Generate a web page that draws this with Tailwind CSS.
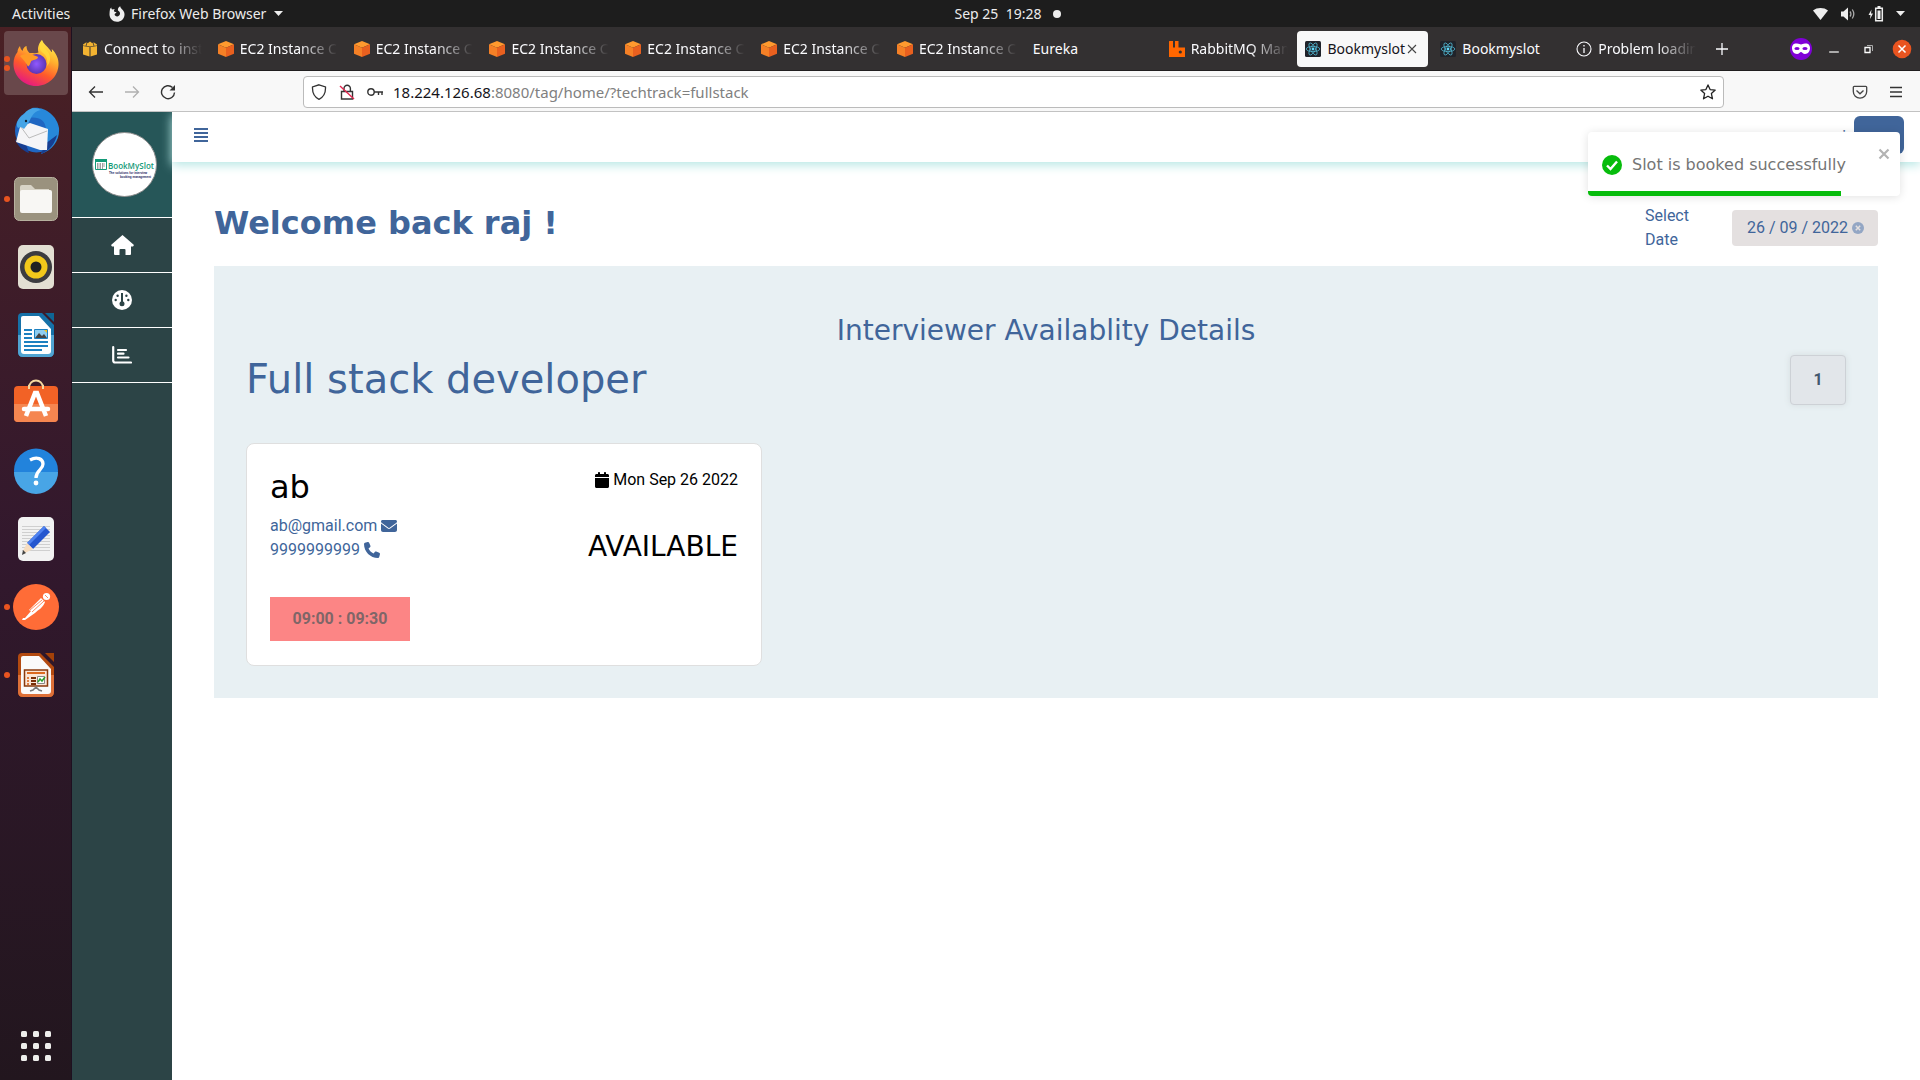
<!DOCTYPE html>
<html lang="en">
<head>
<meta charset="utf-8">
<title>Bookmyslot</title>
<script src="https://cdn.jsdelivr.net/npm/@tailwindcss/browser@4"></script>
</head>
<body class="flex h-screen flex-col overflow-hidden bg-white font-['Noto_Sans',sans-serif] text-[#40659a]">

<svg class="hidden" aria-hidden="true">
  <symbol id="cube" viewBox="0 0 16 16"><path fill="#ff9a2e" d="M8 0l8 3.3L8 6.8 0 3.3z"/><path fill="#f58026" d="M0 3.3l8 3.5V16l-8-3.2z"/><path fill="#e9601f" d="M16 3.3L8 6.8V16l8-3.2z"/></symbol>
  <symbol id="react" viewBox="0 0 16 16"><rect width="16" height="16" rx="1.5" fill="#20232a"/><g fill="none" stroke="#4fb3cc" stroke-width=".8"><ellipse cx="8" cy="8" rx="6.8" ry="2.6"/><ellipse cx="8" cy="8" rx="6.8" ry="2.6" transform="rotate(60 8 8)"/><ellipse cx="8" cy="8" rx="6.8" ry="2.6" transform="rotate(120 8 8)"/></g><circle cx="8" cy="8" r="1.4" fill="#61dafb"/></symbol>
</svg>

<!-- System bar -->
<header class="relative flex h-[27px] shrink-0 items-center justify-between bg-[#1d1d1d] px-3 text-sm text-[#ececec]">
  <div class="flex items-center">
    <span class="w-[97px]">Activities</span>
    <svg class="mr-1.5 size-4" viewBox="0 0 16 16"><path fill="#eee" d="M1 3.2C1.300 2.500 1.700 2 2.300 1.600c0 .9.300 1.500.8 2C3.900 3.200 5 3.100 5.800 3.300 5 4.200 4.700 5 5.200 5.600c.6.600 1.800.3 2.300.7-.3 1-1.700 1-1.900 2C5.700 9.700 7 10.500 8.400 10.400c1.700-.2 2.800-1.600 2.600-3.300-.2-1.300-1.200-2-2-2.600C8.500 2.700 9.600.9 11.200.2c0 1.600 1.300 2.200 2.300 3.500C15 5.500 15.700 7 15.500 9c-.4 4-3.600 6.800-7.500 6.800-4.200 0-7.500-3.300-7.500-7.500C.5 6.400.7 4.700 1 3.200z"/></svg>
    <span>Firefox Web Browser</span>
    <svg class="ml-2 h-[5px] w-[9px]" viewBox="0 0 9 5"><path fill="#eee" d="M0 0h9L4.500 5z"/></svg>
  </div>
  <div class="absolute inset-x-0 flex items-center justify-center gap-3 whitespace-pre pl-24"><span>Sep 25  19:28</span><span class="size-2 rounded-full bg-[#eee]"></span></div>
  <div class="flex items-center gap-3 pr-[3px]">
    <svg class="h-3 w-[15px]" viewBox="0 0 15 12"><path fill="#eee" d="M0 2.500C4-.8 11-.8 15 2.500L7.500 12z"/></svg>
    <svg class="h-[14px] w-4" viewBox="0 0 16 14"><path fill="#eee" d="M1 4.500h2.500L8 .5v13L3.500 9.500H1z"/><path fill="none" stroke="#aaa" stroke-width="1.300" d="M10 4.500q1.800 2.500 0 5M12.300 2.500q3 4.500 0 9"/></svg>
    <svg class="h-4 w-4" viewBox="0 0 16 16"><path fill="#eee" d="M3.500 3.500L.5 9h2l-.5 4 3-5.500H3z"/><path fill="none" stroke="#eee" stroke-width="1.500" d="M7.700 2.300h6.600v12.500H7.700z"/><path fill="#eee" d="M9.500 4.500h3v8.500h-3zM9.500 0h3v2h-3z"/></svg>
    <svg class="h-[5px] w-[9px]" viewBox="0 0 9 5"><path fill="#eee" d="M0 0h9L4.500 5z"/></svg>
  </div>
</header>

<div class="flex min-h-0 flex-1">

  <!-- Dock -->
  <aside class="flex w-18 shrink-0 flex-col justify-between border-r border-[#1e1020] bg-linear-to-b from-[#4a2024] via-[#32182d] to-[#22161e] pt-1 pb-[19px]" aria-label="Dock">
    <div class="flex flex-col gap-1">
      <div class="relative mx-auto flex size-16 items-center justify-center rounded-[4px] bg-[#69484b]">
        <span class="absolute left-0 top-[25px] size-[6px] rounded-full bg-[#e95420]"></span><span class="absolute left-0 top-[34px] size-[6px] rounded-full bg-[#e95420]"></span>
        <svg class="size-12" viewBox="0 0 48 48"><defs><linearGradient id="ff" x1=".8" y1="0" x2=".3" y2="1"><stop offset="0" stop-color="#fff44f"/><stop offset=".35" stop-color="#ffb02e"/><stop offset=".65" stop-color="#ff5a2a"/><stop offset="1" stop-color="#e31587"/></linearGradient><radialGradient id="fp"><stop offset="0" stop-color="#9059ff"/><stop offset="1" stop-color="#5b35b5"/></radialGradient></defs><path fill="url(#ff)" d="M30 1c1.500 4 5 6 8 10 1 1 1 2 2 2 0-1 0-2-.3-3C44 14 47 20 46.500 26 46 38 36 47 24 47S1.500 37 1.500 25c0-5 1.500-9 4-12 0-2 .8-4 2.500-6 .3 2 1 3.500 2.500 5C11 9 13 7.500 14.500 7c0 3 1 5 3 7 4 0 7 .5 9-.5C25 9 27 4 30 1z"/><circle cx="24.500" cy="25" r="10" fill="url(#fp)"/><path fill="#ff9a26" d="M8 17c5-3 10-2 13-1 2 1 4 1 5 2 0 3-6 2.500-7 4.500-1 2-1 4-3 5-2-4-5-7-8-10.500z"/><path fill="#ffdc3e" opacity=".75" d="M30 1c-4 5-3 10 1 13 4 3 5 8 4 13 4-4 4-10 1-14-3-4-6-6-6-12z"/></svg>
      </div>
      <div class="relative mx-auto flex size-16 items-center justify-center">
        <svg class="size-12" viewBox="0 0 48 48"><circle cx="24.500" cy="24" r="21.500" fill="#1f66c2"/><path fill="#2788da" d="M20 1c12-2 25 7 27 20 1 12-6 22-18 26 5-8 6-17 5-25C33 12 26 9 15 11z"/><path fill="#173e92" d="M45 28c-2 9-8 16-16 19l4-10zM3 33c4 7 8 11 14 13L14 37z"/><path fill="#f5f5f7" d="M8 20l10-4 18 6-1 21-7 0-24-8z"/><path fill="none" stroke="#bbb" d="M9 20l8 11 18-7"/><path fill="#45a4e6" d="M12 7c4-6 11-7 17-4-6 1-9 5-11 10-2 4-4 6-6 9-2-2-4-2-6-1C3 17 6 11 12 7z"/><circle cx="14" cy="14" r="1.200" fill="#123"/></svg>
      </div>
      <div class="relative mx-auto flex size-16 items-center justify-center">
        <span class="absolute left-0 top-[29px] size-[6px] rounded-full bg-[#e95420]"></span>
        <svg class="size-12" viewBox="0 0 48 48"><rect x="2.500" y="2.500" width="43" height="43" rx="5" fill="#9a927e" stroke="#b7b19f"/><path fill="#d8d4c7" d="M8 12q0-2 2-2h9l4 4h14v5H8z"/><rect x="8" y="15" width="32" height="23" rx="2" fill="#f8f7f4"/></svg>
      </div>
      <div class="relative mx-auto flex size-16 items-center justify-center">
        <svg class="size-12" viewBox="0 0 48 48"><rect x="6" y="2" width="36" height="44" rx="5" fill="#e3dfd3"/><circle cx="24" cy="24" r="16" fill="#3c3c40"/><circle cx="24" cy="24" r="11.500" fill="#f2c81b"/><circle cx="24" cy="24" r="5.500" fill="#222"/></svg>
      </div>
      <div class="relative mx-auto flex size-16 items-center justify-center">
        <svg class="size-12" viewBox="0 0 48 48"><path fill="#1671a8" d="M10 2h20l12 12v27q0 5-5 5H11q-5 0-5-5V6q0-4 4-4z"/><path fill="#50a4d2" d="M6 24h36v17q0 5-5 5H11q-5 0-5-5z"/><path fill="#0e6595" d="M33 2h9v9z"/><path fill="#fff" d="M11 5h16l12 13v22q0 3-3 3H12q-3 0-3-3V7q0-2 2-2z"/><path stroke="#1c80c0" stroke-width="2" d="M12 19h8M12 23h8M12 27h8M12 31h24M12 35h24M12 39h18"/><path fill="#8ecdf0" stroke="#1c80c0" d="M22.500 18.500h13v9h-13z"/><path fill="#444" d="M23 27l4-5 3 3 2-2 3 4z"/><path fill="#f0c020" d="M32 19h3v3z"/></svg>
      </div>
      <div class="relative mx-auto flex size-16 items-center justify-center">
        <svg class="size-12" viewBox="0 0 48 48"><path fill="none" stroke="#f5d9a0" stroke-width="2" d="M17 9C17-1 31-1 31 9"/><rect x="2" y="7" width="44" height="36" rx="4" fill="#f26226"/><path fill="#f58650" d="M2 25h44v14q0 4-4 4H6q-4 0-4-4z"/><path fill="none" stroke="#f5d9a0" stroke-width="2" d="M17 6v4M31 6v4"/><path fill="none" stroke="#fff" stroke-width="4.500" d="M14 37l9-23h2l9 23"/><path stroke="#fff" stroke-width="4.500" stroke-linecap="round" d="M12 30h24"/></svg>
      </div>
      <div class="relative mx-auto flex size-16 items-center justify-center">
        <svg class="size-12" viewBox="0 0 48 48"><circle cx="24" cy="23.500" r="22" fill="#2283dc"/><path fill="#48a5e6" d="M2 25h44a22 22 0 0 1-44 0z"/><path fill="none" stroke="#fff" stroke-width="3.300" d="M18 13c7-4 13-1 13 4 0 6-7 6-7 14"/><circle cx="24" cy="36" r="2.400" fill="#fff"/></svg>
      </div>
      <div class="relative mx-auto flex size-16 items-center justify-center">
        <svg class="size-12" viewBox="0 0 48 48"><rect x="6" y="2" width="36" height="44" rx="5" fill="#f2f2f2"/><path stroke="#cfcfcf" d="M10 11.500h28M10 14.500h28M10 17.500h28M10 20.500h28M10 23.500h28M10 26.500h28M10 29.500h28M10 32.500h28M10 35.500h28"/><path fill="#2456cf" d="M32 11l6 6-17 17-6-6z"/><path fill="#4f82f0" d="M32 11l2 2-17 17-2-2z"/><path fill="#f7ddc0" d="M15 28l6 6-8 4-2-2z"/><path fill="#444" d="M11 35l3 3-4 2z"/></svg>
      </div>
      <div class="relative mx-auto flex size-16 items-center justify-center">
        <span class="absolute left-0 top-[29px] size-[6px] rounded-full bg-[#e95420]"></span>
        <svg class="size-12" viewBox="0 0 48 48"><circle cx="24" cy="24" r="23" fill="#ff6c37"/><circle cx="34.500" cy="13.500" r="3.600" fill="#fff"/><path fill="#fff" d="M29 15l4 4c-2 6-7 8-10 11l-10 7-3 0 1-2 2 0 6-7-2-1 5-5z"/><path stroke="#ff6c37" stroke-width=".8" d="M32 18L20 29M30 17L18 27M33 12l3 3"/></svg>
      </div>
      <div class="relative mx-auto flex size-16 items-center justify-center">
        <span class="absolute left-0 top-[29px] size-[6px] rounded-full bg-[#e95420]"></span>
        <svg class="size-12" viewBox="0 0 48 48"><path fill="#b34a10" d="M10 2h18l14 14v25q0 5-5 5H11q-5 0-5-5V6q0-4 4-4z"/><path fill="#dd7038" d="M6 24h36v17q0 5-5 5H11q-5 0-5-5z"/><path fill="#a34108" d="M33 2h9v9z"/><path fill="#fafafa" d="M11 5h16l12 13v22q0 3-3 3H12q-3 0-3-3V7q0-2 2-2z"/><path fill="#fbe6d8" stroke="#8a3a0c" stroke-width="1.500" d="M12.500 19h23v16h-23z"/><path stroke="#dd6a20" stroke-width="2" d="M15 22h18"/><path stroke="#e08040" stroke-width="2" d="M15 27h2M15 30h2M15 33h2"/><path stroke="#7a2f08" stroke-width="2" d="M19 27h5M19 30h5M19 33h5"/><path fill="#fff" stroke="#888" d="M25.500 25.500h7v7h-7z"/><path fill="none" stroke="#2ba02b" stroke-width="1.500" d="M26 31l2-3 2 2 3-4"/><path fill="none" stroke="#777" stroke-width="1.500" d="M18 40l3-1 3-3 3 3 3 1"/></svg>
      </div>
    </div>
    <svg class="mx-auto size-[30px]" viewBox="0 0 30 30" fill="#eeeeec"><rect width="6" height="6" rx="1.500"/><rect x="12" width="6" height="6" rx="1.500"/><rect x="24" width="6" height="6" rx="1.500"/><rect y="12" width="6" height="6" rx="1.500"/><rect x="12" y="12" width="6" height="6" rx="1.500"/><rect x="24" y="12" width="6" height="6" rx="1.500"/><rect y="24" width="6" height="6" rx="1.500"/><rect x="12" y="24" width="6" height="6" rx="1.500"/><rect x="24" y="24" width="6" height="6" rx="1.500"/></svg>
  </aside>

  <div class="flex min-w-0 flex-1 flex-col">

    <!-- Tab strip -->
    <div class="flex h-11 shrink-0 items-center border-b border-[#201e1f] bg-[#333031] pl-0.5 pt-px text-sm text-[#fbfbfe]">
      <div class="grid min-w-0 flex-1 grid-cols-12 items-center whitespace-nowrap">
        <div class="flex items-center gap-1.5 px-2"><svg class="size-4 shrink-0" viewBox="0 0 16 16"><path fill="#f3b331" d="M1 5l6.500 1v9.500L1 13.500zM15 5L8.500 6v9.500L15 13.500z"/><path fill="#f3b331" d="M1 3.500L4 1.500l2 .5 2-1.500 2 1.500 2-.5 3 2v1L8 5.500 1 4.500z"/><path stroke="#333031" stroke-width=".8" d="M5 1.500L4 5M11 1.500L12 5"/></svg><span class="flex-1 overflow-hidden mask-r-from-60%">Connect to instance</span></div>
        <div class="flex items-center gap-1.5 px-2"><svg class="size-4 shrink-0"><use href="#cube"/></svg><span class="flex-1 overflow-hidden mask-r-from-60%">EC2 Instance Connect</span></div>
        <div class="flex items-center gap-1.5 px-2"><svg class="size-4 shrink-0"><use href="#cube"/></svg><span class="flex-1 overflow-hidden mask-r-from-60%">EC2 Instance Connect</span></div>
        <div class="flex items-center gap-1.5 px-2"><svg class="size-4 shrink-0"><use href="#cube"/></svg><span class="flex-1 overflow-hidden mask-r-from-60%">EC2 Instance Connect</span></div>
        <div class="flex items-center gap-1.5 px-2"><svg class="size-4 shrink-0"><use href="#cube"/></svg><span class="flex-1 overflow-hidden mask-r-from-60%">EC2 Instance Connect</span></div>
        <div class="flex items-center gap-1.5 px-2"><svg class="size-4 shrink-0"><use href="#cube"/></svg><span class="flex-1 overflow-hidden mask-r-from-60%">EC2 Instance Connect</span></div>
        <div class="flex items-center gap-1.5 px-2"><svg class="size-4 shrink-0"><use href="#cube"/></svg><span class="flex-1 overflow-hidden mask-r-from-60%">EC2 Instance Connect</span></div>
        <div class="px-2">Eureka</div>
        <div class="flex items-center gap-1.5 px-2"><svg class="size-4 shrink-0" viewBox="0 0 16 16"><path fill="#f60" d="M0 .5Q0 0 .5 0h3.500v6.500h2V0H9.500v6.500H16V16H0z"/><circle cx="11.300" cy="11" r="1.600" fill="#333031"/></svg><span class="flex-1 overflow-hidden mask-r-from-60%">RabbitMQ Management</span></div>
        <div class="pl-px pr-1"><div class="flex h-9 items-center rounded-[4px] bg-[#f8f8f8] pl-2 text-[#15141a]"><svg class="mr-1.5 size-4 shrink-0"><use href="#react"/></svg><span>Bookmyslot</span><button class="ml-px shrink-0" aria-label="Close tab"><svg class="size-3" viewBox="0 0 12 12"><path stroke="#444" stroke-width="1.100" d="M2 2l8 8M10 2l-8 8"/></svg></button></div></div>
        <div class="flex items-center gap-1.5 px-2"><svg class="size-4 shrink-0"><use href="#react"/></svg><span>Bookmyslot</span></div>
        <div class="flex items-center gap-1.5 px-2"><svg class="size-4 shrink-0" viewBox="0 0 16 16"><circle cx="8" cy="8" r="7" fill="none" stroke="#fbfbfe" stroke-width="1.100"/><path stroke="#fbfbfe" stroke-width="1.300" d="M8 7v5M8 4v1.600"/></svg><span class="flex-1 overflow-hidden mask-r-from-60%">Problem loading page</span></div>
      </div>
      <button class="ml-2.5 mr-[60px]" aria-label="New tab"><svg class="size-4" viewBox="0 0 16 16"><path stroke="#fbfbfe" stroke-width="1.300" d="M8 2v12M2 8h12"/></svg></button>
      <div class="flex items-center pr-2">
        <svg class="size-[22px]" viewBox="0 0 22 22"><circle cx="11" cy="11" r="11" fill="#8000d7"/><path fill="#fff" d="M2 10c0-4 3-5 5-4.500 2 .4 3 .9 4 .9s2-.5 4-.9c2-.5 5 .5 5 4.500 0 3-2 6-5 6-2 0-3-2-4-2s-2 2-4 2c-3 0-5-3-5-6z"/><ellipse cx="7" cy="10.500" rx="2.600" ry="1.600" fill="#8000d7"/><ellipse cx="15" cy="10.500" rx="2.600" ry="1.600" fill="#8000d7"/></svg>
        <button class="ml-4" aria-label="Minimize"><svg class="size-3" viewBox="0 0 10 10"><path stroke="#fff" d="M1 7.500h8"/></svg></button>
        <button class="ml-[22px]" aria-label="Restore"><svg class="size-3" viewBox="0 0 12 12"><path fill="none" stroke="#aaa" d="M5 2.500h5.500V8"/><path fill="none" stroke="#fff" stroke-width="1.300" d="M3 4.500h5v5H3z"/></svg></button>
        <button class="ml-[18px]" aria-label="Close window"><svg class="size-[20px]" viewBox="0 0 20 20"><circle cx="10" cy="10" r="9.300" fill="#e95420"/><path stroke="#fff" stroke-width="1.500" d="M6.500 6.500l7 7M13.500 6.500l-7 7"/></svg></button>
      </div>
    </div>

    <!-- Navigation toolbar -->
    <div class="flex h-[41px] shrink-0 items-center border-b border-[#c2c2c2] bg-[#f8f8f8] px-4 pt-px">
      <button aria-label="Back"><svg class="size-4" viewBox="0 0 16 16" fill="none" stroke="#333" stroke-width="1.300"><path d="M15 8H1.500M7 2.500L1.500 8 7 13.500"/></svg></button>
      <button class="ml-5" aria-label="Forward"><svg class="size-4" viewBox="0 0 16 16" fill="none" stroke="#b0b0b0" stroke-width="1.300"><path d="M1 8h13.500M9 2.500L14.500 8 9 13.500"/></svg></button>
      <button class="ml-5" aria-label="Reload"><svg class="size-4" viewBox="0 0 16 16" fill="none" stroke="#333" stroke-width="1.400"><path d="M14.500 8.500A6.500 6.500 0 1 1 12.500 3.500"/><path fill="#333" stroke="none" d="M15 1v5.500H9.500z"/></svg></button>
      <div class="ml-[127px] mr-32 flex h-8 flex-1 items-center rounded-[4px] border border-[#bbb] bg-white px-[7px]">
        <svg class="size-4" viewBox="0 0 16 16" fill="none" stroke="#333" stroke-width="1.300"><path d="M8 .8L14.500 3c.3 6-1.500 10-6.500 12.300C3 13 1.200 9 1.500 3z"/></svg>
        <svg class="ml-3 size-4" viewBox="0 0 16 16" fill="none" stroke="#333" stroke-width="1.400"><path d="M2.500 7.500h11V15h-11zM5 7V4.500a3.200 3.200 0 0 1 6.400 0V7"/><path stroke="#e22850" d="M1 2l14 13"/></svg>
        <svg class="ml-3 size-4" viewBox="0 0 16 16" fill="none" stroke="#333" stroke-width="1.400"><circle cx="4" cy="8" r="3.200"/><path d="M7 8h9M11.500 8v3M15 8v3"/></svg>
        <a href="#" class="ml-2.5 flex-1 text-[15px] leading-5 text-[#808080]"><span class="text-[#15141a]">18.224.126.68</span>:8080/tag/home/?techtrack=fullstack</a>
        <button aria-label="Bookmark this page"><svg class="size-4" viewBox="0 0 16 16" fill="none" stroke="#222" stroke-width="1.300" stroke-linejoin="round"><path d="M8 .9l2.100 4.700 5.100.5-3.800 3.500 1.100 5.200L8 12.200l-4.500 2.600 1.100-5.200L.8 6.100l5.100-.5z"/></svg></button>
      </div>
      <button class="mr-5" aria-label="Save to Pocket"><svg class="size-4" viewBox="0 0 16 16" fill="none" stroke="#444" stroke-width="1.300"><path d="M2.300 2.300h11.400q1 0 1 1V7.500a6.700 6.700 0 0 1-13.400 0V3.300q0-1 1-1z"/><path d="M4.500 6.500L8 9.800l3.500-3.300"/></svg></button>
      <button aria-label="Menu"><svg class="size-4" viewBox="0 0 16 16"><path stroke="#333" stroke-width="1.300" d="M2 3.500h12M2 8h12M2 12.500h12"/></svg></button>
    </div>

    <!-- Page -->
    <div class="relative flex min-h-0 flex-1 overflow-hidden font-['Roboto',sans-serif] text-base leading-6">
      <nav class="flex w-25 shrink-0 flex-col bg-[#2c4446]">
        <a href="#" aria-label="BookMySlot" class="flex h-[106px] items-center justify-center border-b border-white bg-[#265658] pl-1">
          <svg class="size-[65px]" viewBox="0 0 65 65"><circle cx="32.500" cy="32.500" r="32" fill="#fff" stroke="#8c8c8c"/><path fill="#fff" stroke="#149a78" d="M3.500 27.500h11v10h-11z"/><path fill="#149a78" d="M3 27h12v3H3z"/><path stroke="#444" stroke-width="1.200" stroke-dasharray="1.500 1" d="M5 32h8M5 34h8M5 36h6"/><text x="16" y="37" font-family="Open Sans, sans-serif" font-size="8" font-weight="600" fill="#149a78">BookMySlot</text><text x="17" y="42" font-family="Liberation Sans, sans-serif" font-size="3" font-weight="700" fill="#1b1b60">The solutions for interview</text><text x="28" y="46" font-family="Liberation Sans, sans-serif" font-size="3" font-weight="700" fill="#1b1b60">booking management</text></svg>
        </a>
        <a href="#" aria-label="Home" class="flex h-[55px] items-center justify-center border-b border-white"><svg class="h-5 w-[23px]" viewBox="0 0 23 20"><path fill="#fff" d="M11.500 0L23 10l-1 1.500h-2V19q0 1-1 1h-4.500v-5q0-1-1-1h-4q-1 0-1 1v5H4q-1 0-1-1v-7.500H1L0 10z"/></svg></a>
        <a href="#" aria-label="Dashboard" class="flex h-[55px] items-center justify-center border-b border-white"><svg class="size-5" viewBox="0 0 20 20"><circle cx="10" cy="10" r="10" fill="#fff"/><g fill="#2c4446"><circle cx="10" cy="13.800" r="2.500"/><path d="M9 3h2v10H9z"/><circle cx="5.600" cy="5.800" r="1.200"/><circle cx="14.400" cy="5.800" r="1.200"/><circle cx="3.700" cy="10" r="1.200"/><circle cx="16.300" cy="10" r="1.200"/></g></svg></a>
        <a href="#" aria-label="Reports" class="flex h-[55px] items-center justify-center border-b border-white"><svg class="size-5" viewBox="0 0 20 20" fill="none" stroke="#fff" stroke-width="2.200" stroke-linecap="round"><path d="M1.200 2v13.500q0 2 2 2H19M6 5h8M6 8.700h5.500M6 12.500h10.500"/></svg></a>
      </nav>

      <main class="flex min-w-0 flex-1 flex-col">
        <div class="flex h-[50px] shrink-0 items-center bg-white pb-1 pl-[22px] pr-4 shadow-[0_3px_10px_#b5e6e4]">
          <button aria-label="Toggle menu"><svg class="block size-3.5" viewBox="0 0 14 14"><path fill="#40659a" d="M0 0h14v2H0zM0 4h14v2H0zM0 8h14v2H0zM0 12h14v2H0z"/></svg></button>
          <span class="ml-auto mr-2 pt-1">raj</span>
          <button class="h-[38px] w-[50px] rounded-md bg-[#40659a]" aria-label="Log out"></button>
        </div>

        <div class="px-[42px] pt-[42px]">
          <div class="flex items-start justify-between">
            <h1 class="font-['DejaVu_Sans',sans-serif] text-[32px] leading-[38px] font-bold">Welcome back raj !</h1>
            <div class="flex items-center">
              <label for="date" class="w-[87px]"><span class="block w-12">Select Date</span></label>
              <div class="flex h-9 items-center rounded-[4px] bg-[#e4e0e0] pl-[15px] pr-[14px]">
                <input id="date" type="text" value="26 / 09 / 2022" class="w-[105px] bg-transparent outline-none">
                <button aria-label="Clear date"><svg class="block size-3" viewBox="0 0 12 12"><circle cx="6" cy="6" r="6" fill="#93a6c4"/><path stroke="#e4e0e0" stroke-width="1.500" d="M3.800 3.800l4.400 4.400M8.200 3.800l-4.400 4.400"/></svg></button>
              </div>
            </div>
          </div>

          <section class="mt-[14px] bg-[#e8f0f3] px-8 pt-12 pb-8">
            <h2 class="text-center font-['DejaVu_Sans',sans-serif] text-[28px] leading-[34px]">Interviewer Availablity Details</h2>
            <div class="mt-[7px] flex items-start justify-between">
              <h3 class="font-['DejaVu_Sans',sans-serif] text-[40px] leading-12">Full stack developer</h3>
              <button class="h-[50px] w-14 rounded-[4px] border border-[#cdd1d6] bg-[#e2e6ea] font-bold text-[#43586e] shadow-[0_0_6px_#d5dcdf]">1</button>
            </div>

            <article class="mt-[38px] w-full max-w-[516px] rounded-lg border border-[#dfdfdf] bg-white px-[23px] py-6">
              <div class="flex justify-between text-black">
                <div>
                  <h4 class="font-['DejaVu_Sans',sans-serif] text-[32px] leading-[38px]">ab</h4>
                  <p class="mt-2 text-[#40659a]">
                    <a href="#" class="flex items-center gap-1">ab@gmail.com <svg class="size-4" viewBox="0 0 512 512"><path fill="#40659a" d="M48 64C21.500 64 0 85.500 0 112c0 15.100 7.100 29.300 19.200 38.400L236.800 313.600c11.400 8.500 27 8.500 38.400 0L492.800 150.400c12.100-9.100 19.200-23.300 19.200-38.400c0-26.500-21.500-48-48-48H48zM0 176V384c0 35.300 28.700 64 64 64H448c35.300 0 64-28.700 64-64V176L294.400 339.200c-22.800 17.100-54 17.100-76.800 0L0 176z"/></svg></a>
                    <a href="#" class="flex items-center gap-1">9999999999 <svg class="size-4" viewBox="0 0 512 512"><path fill="#40659a" d="M164.900 24.600c-7.700-18.600-28-28.500-47.400-23.200l-88 24C12.100 30.200 0 46 0 64C0 311.400 200.600 512 448 512c18 0 33.800-12.100 38.600-29.500l24-88c5.300-19.400-4.600-39.700-23.200-47.400l-96-40c-16.300-6.800-35.200-2.100-46.300 11.600L304.700 368C234.300 334.700 177.300 277.700 144 207.300L193.300 167c13.700-11.200 18.400-30 11.600-46.300l-40-96z"/></svg></a>
                  </p>
                </div>
                <div class="flex flex-col items-end">
                  <p class="flex items-center gap-1"><svg class="h-4 w-3.5" viewBox="0 0 448 512"><path d="M96 32V64H48C21.500 64 0 85.500 0 112v48H448V112c0-26.500-21.500-48-48-48H352V32c0-17.700-14.300-32-32-32s-32 14.300-32 32V64H160V32c0-17.700-14.300-32-32-32S96 14.300 96 32zM448 192H0V464c0 26.500 21.500 48 48 48H400c26.500 0 48-21.500 48-48V192z"/></svg>Mon Sep 26 2022</p>
                  <p class="mt-[38px] font-['DejaVu_Sans',sans-serif] text-[28px] leading-[34px]">AVAILABLE</p>
                </div>
              </div>
              <button class="mt-[33px] block h-11 w-[140px] bg-[#fc8585] font-bold text-[#7f6668]">09:00 : 09:30</button>
            </article>
          </section>
        </div>
      </main>

      <!-- Notification -->
      <div role="alert" class="absolute right-5 top-5 flex h-16 w-[312px] items-center overflow-hidden rounded-[4px] bg-white pl-3.5 pt-px font-['DejaVu_Sans',sans-serif] text-base text-[#757575] shadow-[0_1px_10px_rgba(0,0,0,0.12)]">
        <svg class="mr-2.5 size-5" viewBox="0 0 20 20"><circle cx="10" cy="10" r="10" fill="#07bc0c"/><path fill="none" stroke="#fff" stroke-width="2.400" d="M5 10.500l3.500 3.500 6.500-7.500"/></svg>
        <span>Slot is booked successfully</span>
        <button class="absolute right-2.5 top-4" aria-label="Dismiss"><svg class="block size-3" viewBox="0 0 12 12"><path stroke="#b3b3b3" stroke-width="2.200" d="M1.500 1.500l9 9M10.500 1.500l-9 9"/></svg></button>
        <span class="absolute bottom-0 left-0 h-[5px] bg-[#07bc0c]" style="width:81%"></span>
      </div>
    </div>
  </div>
</div>
</body>
</html>
